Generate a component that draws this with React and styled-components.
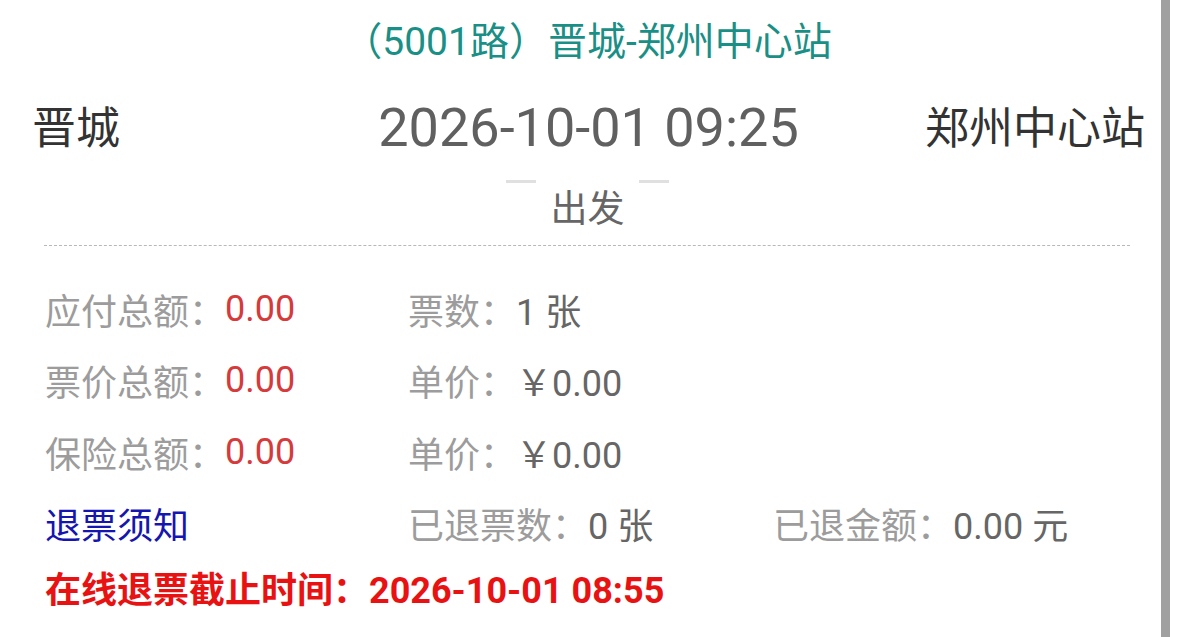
import React from "react"
import styled, { createGlobalStyle } from "styled-components"

// ■■■■■■■■■■■■■■■■■■■■■■■■■■■■■■■■■■■■■■■■■■■■■■■■■■■■■■■■■■■■■■■■■■■■■■■■■■■■■

const GlobalStyle = createGlobalStyle`
	html, body {
		margin: 0;
		padding: 0;
		background: #ffffff;
	}
	body {
		font-family: Roboto, "Noto Sans CJK SC", sans-serif;
	}
`

const infoRows = [
	[
		{ label: "应付总额：", value: "0.00", tone: "red" },
		{ label: "票数：", value: "1 张" },
		null,
	],
	[
		{ label: "票价总额：", value: "0.00", tone: "red" },
		{ label: "单价：", value: "￥0.00" },
		null,
	],
	[
		{ label: "保险总额：", value: "0.00", tone: "red" },
		{ label: "单价：", value: "￥0.00" },
		null,
	],
]

// ■■■■■■■■■■■■■■■■■■■■■■■■■■■■■■■■■■■■■■■■■■■■■■■■■■■■■■■■■■■■■■■■■■■■■■■■■■■■■

export default function App() {
	return (
		<>
			<GlobalStyle />
			<Page>
				<Main>
					<Title>（5001路）晋城-郑州中心站</Title>
					<RouteRow>
						<City>晋城</City>
						<DateTime>2026-10-01 09:25</DateTime>
						<City $right>郑州中心站</City>
					</RouteRow>
					<Ticks>
						<Tick />
						<Tick />
					</Ticks>
					<Depart>出发</Depart>
					<Divider />
					<InfoGrid>
						{infoRows.map((row, i) =>
							row.map((cell, j) =>
								cell ? (
									<Cell key={i + "-" + j}>
										<Label>{cell.label}</Label>
										<Value $tone={cell.tone}>{cell.value}</Value>
									</Cell>
								) : (
									<Cell key={i + "-" + j} />
								)
							)
						)}
						<Cell>
							<NoticeLink>退票须知</NoticeLink>
						</Cell>
						<Cell>
							<Label>已退票数：</Label>
							<Value>0 张</Value>
						</Cell>
						<Cell>
							<Label>已退金额：</Label>
							<Value>0.00 元</Value>
						</Cell>
					</InfoGrid>
					<Deadline>在线退票截止时间：2026-10-01 08:55</Deadline>
				</Main>
				<ScrollBar />
			</Page>
		</>
	)
}

// 〓〓〓〓〓〓〓〓〓〓〓〓〓〓〓〓〓〓〓〓〓〓〓〓〓〓〓〓〓〓	STYLED_COMPONENTS

const Page = styled.div`
	display: flex;
	width: 1179px;
	height: 637px;
	overflow: hidden;
`

const Main = styled.div`
	width: 1161px;
	flex: none;
	display: flex;
	flex-direction: column;
`

const ScrollBar = styled.div`
	width: 9px;
	height: 637px;
	background: #a0a0a0;
`

const Title = styled.div`
	margin-top: 14px;
	height: 56px;
	line-height: 56px;
	font-size: 39px;
	color: #1a8f86;
	text-align: center;
	padding-left: 14px;
`

const RouteRow = styled.div`
	display: grid;
	grid-template-columns: 1fr auto 1fr;
	align-items: center;
	height: 110px;
	padding: 0 16px 0 32px;
`

const City = styled.div`
	font-size: 44px;
	color: #333333;
	text-align: ${(p) => (p.$right ? "right" : "left")};
`

const DateTime = styled.div`
	font-size: 54px;
	color: #606060;
	padding-top: 4px;
`

const Ticks = styled.div`
	display: flex;
	justify-content: center;
	gap: 103px;
	height: 3px;
	padding-left: 14px;
`

const Tick = styled.div`
	width: 30px;
	height: 3px;
	background: #e0e0e0;
`

const Depart = styled.div`
	height: 54px;
	line-height: 54px;
	font-size: 37px;
	color: #666666;
	text-align: center;
	padding-left: 14px;
`

const Divider = styled.div`
	margin: 8px 31px 0 44px;
	border-top: 1px dashed #b8b8b8;
`

const InfoGrid = styled.div`
	display: grid;
	grid-template-columns: 363px 365px 1fr;
	grid-auto-rows: 71.5px;
	margin-top: 27px;
	padding-left: 45px;
`

const Cell = styled.div`
	display: flex;
	align-items: center;
	font-size: 36px;
	white-space: nowrap;
`

const Label = styled.span`
	color: #9c9c9c;
`

const Value = styled.span`
	color: ${(p) => (p.$tone === "red" ? "#d63a3b" : "#666666")};
`

const NoticeLink = styled.span`
	color: #1515b0;
`

const Deadline = styled.div`
	margin-top: 2px;
	padding-left: 45px;
	height: 60px;
	line-height: 60px;
	font-size: 36px;
	font-weight: bold;
	color: #e81212;
`
